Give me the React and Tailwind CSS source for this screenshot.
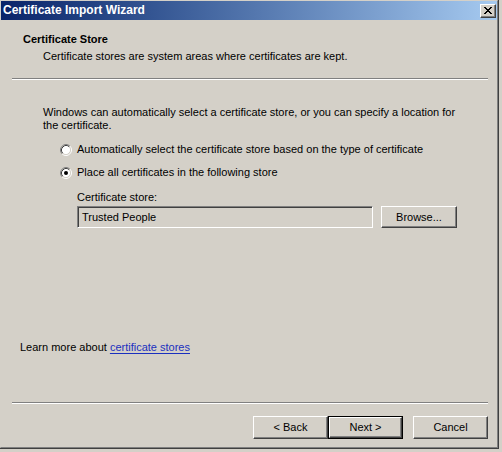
import React from "react";

function CloseGlyph() {
  const rows = [
    "XX....XX",
    ".XX..XX.",
    "..XXXX..",
    "...XX...",
    "..XXXX..",
    ".XX..XX.",
    "XX....XX",
  ];
  const rects = [];
  rows.forEach((r, y) =>
    r.split("").forEach((c, x) => {
      if (c === "X") rects.push(<rect key={`${x}-${y}`} x={x} y={y} width="1" height="1" fill="#000" />);
    })
  );
  return (
    <svg width="8" height="7" viewBox="0 0 8 7" shapeRendering="crispEdges">
      {rects}
    </svg>
  );
}

function Radio({ checked }) {
  return (
    <svg width="12" height="12" viewBox="0 0 12 12" className="shrink-0">
      <circle cx="6" cy="6" r="4.5" fill="#fff" />
      <path d="M2.11 9.89 A5.5 5.5 0 0 1 9.89 2.11" stroke="#808080" strokeWidth="1" fill="none" />
      <path d="M9.89 2.11 A5.5 5.5 0 0 1 2.11 9.89" stroke="#ffffff" strokeWidth="1" fill="none" />
      <path d="M2.82 9.18 A4.5 4.5 0 0 1 9.18 2.82" stroke="#404040" strokeWidth="1" fill="none" />
      <path d="M9.18 2.82 A4.5 4.5 0 0 1 2.82 9.18" stroke="#d4d0c8" strokeWidth="1" fill="none" />
      {checked && <circle cx="6" cy="6" r="2" fill="#000" />}
    </svg>
  );
}

function Button({ children, def, className = "" }) {
  if (def) {
    return (
      <div className={`h-[23px] w-[75px] border border-black ${className}`}>
        <div className="flex h-full w-full items-center justify-center border-t border-l border-t-white border-l-white border-b border-r border-b-[#404040] border-r-[#404040] shadow-[inset_-1px_-1px_0_#808080]">
          {children}
        </div>
      </div>
    );
  }
  return (
    <div
      className={`flex h-[23px] w-[75px] items-center justify-center border-t border-l border-t-white border-l-white border-b border-r border-b-[#404040] border-r-[#404040] shadow-[inset_-1px_-1px_0_#808080] ${className}`}
    >
      {children}
    </div>
  );
}

function Separator({ className = "" }) {
  return (
    <div className={`ml-[11px] w-[476px] ${className}`}>
      <div className="h-px bg-[#808080]" />
      <div className="h-px bg-white" />
    </div>
  );
}

export default function App() {
  return (
    <div className="h-[452px] w-[502px] overflow-hidden bg-[#d4d0c8] font-['Liberation_Sans',Arial,sans-serif] text-[11px] leading-[13px] text-black">
      <div className="h-[449px] w-[499px] border-r border-b border-[#404040]">
        <div className="flex h-full w-full flex-col border-t border-l border-[#d4d0c8] border-r border-b border-r-[#808080] border-b-[#808080]">
          {/* Title bar */}
          <div className="flex h-[19px] shrink-0 items-center bg-linear-to-r from-[#0a246a] to-[#a6caf0] pl-[2px] pr-[1px]">
            <span className="whitespace-nowrap text-[12px] font-bold leading-[19px] text-white">Certificate Import Wizard</span>
            <div className="ml-auto flex h-[14px] w-[16px] items-center justify-center border-t border-l border-t-white border-l-white border-b border-r border-b-[#404040] border-r-[#404040] bg-[#d4d0c8] shadow-[inset_-1px_-1px_0_#808080]">
              <CloseGlyph />
            </div>
          </div>

          {/* Header */}
          <div className="ml-[22px] mt-[13px] whitespace-nowrap font-bold">Certificate Store</div>
          <div className="ml-[42px] mt-[4px] whitespace-nowrap">
            Certificate stores are system areas where certificates are kept.
          </div>
          <Separator className="mt-[15px]" />

          {/* Body */}
          <div className="ml-[42px] mt-[26px] whitespace-nowrap">
            Windows can automatically select a certificate store, or you can specify a location for
            <br />
            the certificate.
          </div>

          <div className="ml-[59px] mt-[11px] flex h-[13px] items-center">
            <Radio />
            <span className="ml-[5px] whitespace-nowrap">
              Automatically select the certificate store based on the type of certificate
            </span>
          </div>
          <div className="ml-[59px] mt-[10px] flex h-[13px] items-center">
            <Radio checked />
            <span className="ml-[5px] whitespace-nowrap">Place all certificates in the following store</span>
          </div>

          <div className="ml-[76px] mt-[12px] whitespace-nowrap">Certificate store:</div>
          <div className="ml-[76px] mt-[2px] flex">
            <div className="flex h-[22px] w-[296px] items-center border-t border-l border-t-[#808080] border-l-[#808080] border-b border-r border-b-white border-r-white shadow-[inset_1px_1px_0_#404040] pl-[4px]">
              <span className="whitespace-nowrap">Trusted People</span>
            </div>
            <Button className="ml-[8px] !h-[22px] !w-[76px]">Browse...</Button>
          </div>

          <div className="ml-[19px] mt-[113px] whitespace-nowrap">
            Learn more about{" "}
            <span className="text-[#1a2fbf] underline underline-offset-[2px]">certificate stores</span>
          </div>

          <Separator className="mt-[48px]" />

          <div className="ml-[252px] mt-[12px] flex">
            <Button>&lt; Back</Button>
            <Button def>Next &gt;</Button>
            <Button className="ml-[10px]">Cancel</Button>
          </div>
        </div>
      </div>
    </div>
  );
}
